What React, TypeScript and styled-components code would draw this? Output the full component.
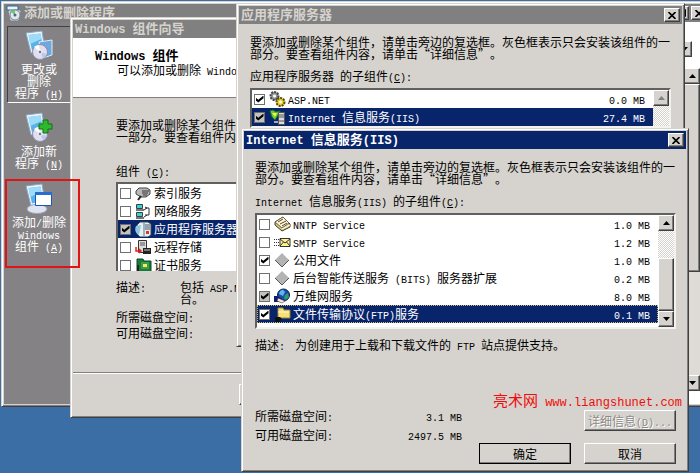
import React from "react";
import styled, { createGlobalStyle, css } from "styled-components";

const face = "#d6d3ce";
const shade = "#808080";
const dark = "#404040";
const navy = "#08246b";

const GlobalStyle = createGlobalStyle`
  * { box-sizing: border-box; }
  html, body { margin: 0; height: 100%; }
  body {
    font: 12px/12px "Noto Sans CJK SC", sans-serif;
    color: #000;
    text-spacing-trim: space-all;
    overflow: hidden;
  }
  p, h1, h2, dl, dd, dt, ul { margin: 0; padding: 0; }
`;

/* ---------- text ---------- */

const Latin = styled.span<{ $size: number }>`
  font-family: "Liberation Mono", monospace;
  font-size: ${(p) => p.$size}px;
  line-height: 0;
  white-space: pre-wrap;
`;

/* Latin runs are set in a half-width face; "&" marks an accelerator key. */
function Mixed({ text, size = 10 }: { text: string; size?: number }) {
  return (
    <>
      {text.split(/([\x20-\x7e]+)/).map((run, i) => {
        if (i % 2 === 0) return run;
        const at = run.indexOf("&");
        return (
          <Latin key={i} $size={size}>
            {at < 0 ? run : (
              <>
                {run.slice(0, at)}
                <u>{run[at + 1]}</u>
                {run.slice(at + 2)}
              </>
            )}
          </Latin>
        );
      })}
    </>
  );
}

/* ---------- window chrome ---------- */

const raised = css`
  border: 1px solid;
  border-color: #fff ${dark} ${dark} #fff;
  box-shadow: inset -1px -1px 0 ${shade};
  background: ${face};
`;

const Desktop = styled.main`
  position: relative;
  min-height: 100vh;
  overflow: hidden;
  background: #3a6ea5;
`;

const Window = styled.section<{ $top: number; $left: number; $right: number }>`
  position: absolute;
  top: ${(p) => p.$top}px;
  left: ${(p) => p.$left}px;
  right: ${(p) => p.$right}px;
  padding: 2px;
  background: ${face};
  border: 1px solid;
  border-color: ${face} ${dark} ${dark} ${face};
  box-shadow: inset 1px 1px 0 #fff, inset -1px -1px 0 ${shade};
`;

const TitleBar = styled.header<{ $active?: boolean }>`
  display: flex;
  align-items: center;
  gap: 2px;
  height: 18px;
  padding: 0 2px;
  background: ${(p) => (p.$active ? navy : shade)};
  color: ${(p) => (p.$active ? "#fff" : face)};
`;

const Title = styled.h1`
  flex: 1;
  padding-bottom: 2px;
  font-size: 13px;
  line-height: 16px;
  font-weight: 700;
  white-space: nowrap;
`;

const CaptionButton = styled.button`
  ${raised}
  display: grid;
  place-items: center;
  width: 16px;
  height: 14px;
  padding: 0;
  color: #000;
`;

const CloseGlyph = () => (
  <svg width="8" height="7" viewBox="0 0 8 7" stroke="currentColor" strokeWidth="1.6">
    <path d="M0.5 0L7.5 7M7.5 0L0.5 7" />
  </svg>
);

const Close = () => (
  <CaptionButton aria-label="关闭"><CloseGlyph /></CaptionButton>
);

/* ---------- scroll bar ---------- */

const Track = styled.div`
  display: flex;
  flex-direction: column;
  width: 16px;
  background: repeating-conic-gradient(#fff 0 25%, ${face} 0 50%) 0 0 / 2px 2px;
`;

const ArrowButton = styled.button`
  ${raised}
  display: grid;
  place-items: center;
  flex: none;
  width: 16px;
  height: 16px;
  padding: 0;
  color: #000;
  &:disabled { color: ${shade}; }
`;

const Thumb = styled.div<{ $before: number; $length: number }>`
  ${raised}
  margin-top: ${(p) => p.$before}px;
  height: ${(p) => p.$length}px;
`;

const Gap = styled.div`
  flex: 1;
`;

const Arrow = ({ down }: { down?: boolean }) => (
  <svg width="7" height="4" viewBox="0 0 7 4" fill="currentColor">
    <path d={down ? "M0 0H7L3.5 4Z" : "M0 4H7L3.5 0Z"} />
  </svg>
);

/* ---------- component list ---------- */

const ListBox = styled.div`
  display: flex;
  border: 2px solid;
  border-color: #606060 #f4f2ee #f4f2ee #606060;
  background: #fff;
`;

const Rows = styled.ul<{ $end: number }>`
  flex: 1;
  min-width: 0;
  list-style: none;
  padding-bottom: ${(p) => p.$end}px;
`;

const Row = styled.li<{ $selected?: boolean; $focused?: boolean }>`
  background: ${(p) => (p.$selected ? navy : "#fff")};
  color: ${(p) => (p.$selected ? "#fff" : "#000")};
  outline: ${(p) => (p.$focused ? "1px dotted #c8b878" : "none")};
  outline-offset: -1px;
`;

const RowLabel = styled.label`
  display: flex;
  align-items: center;
  height: 18px;
  padding: 0 8px 0 2px;
  gap: 4px;
  white-space: nowrap;
  svg { flex: none; }
`;

const RowName = styled.span`
  flex: 1;
  margin-left: -2px;
`;

const Check = styled.input<{ $grey?: boolean }>`
  appearance: none;
  flex: none;
  display: grid;
  place-items: center;
  width: 11px;
  height: 11px;
  margin: 0;
  border: 1px solid #707070;
  background: ${(p) => (p.$grey ? "#c4c2be" : "#fff")};
  &:checked::after {
    content: "";
    width: 8px;
    height: 7px;
    background: #000;
    clip-path: polygon(0 30%, 35% 60%, 100% 0, 100% 38%, 35% 100%, 0 68%);
  }
`;

interface Item {
  name: string;
  icon: React.ReactNode;
  size?: string;
  checked?: boolean;
  grey?: boolean;
  selected?: boolean;
  focused?: boolean;
}

function ComponentRows({ items, end = 0 }: { items: Item[]; end?: number }) {
  return (
    <Rows $end={end}>
      {items.map((it) => (
        <Row key={it.name} $selected={it.selected} $focused={it.focused}>
          <RowLabel>
            <Check type="checkbox" defaultChecked={it.checked} $grey={it.grey} />
            {it.icon}
            <RowName><Mixed text={it.name} /></RowName>
            {it.size && <span><Mixed text={it.size} /></span>}
          </RowLabel>
        </Row>
      ))}
    </Rows>
  );
}

/* ---------- small icons ---------- */

const Icon = ({ children }: { children: React.ReactNode }) => (
  <svg width="17" height="16" viewBox="0 0 17 16">{children}</svg>
);

const IndexIcon = (
  <Icon>
    <path d="M1 6L4 3H12L15 5V9L11 12H6L1 9Z" fill="#b8b8b8" stroke="#444" />
    <path d="M7 6H14M7 8H13M8 10H12" stroke="#333" />
    <path d="M6 11L3 15" stroke="#222" strokeWidth="2" />
  </Icon>
);
const NetworkIcon = (
  <Icon>
    <path d="M1.500 1.500H7.500V5.500H1.500ZM1.500 9.500H7.500V13.500H1.500Z" fill="#4cc" stroke="#344" />
    <path d="M1 7H9M1 15H9" stroke="#777" strokeWidth="2" />
    <path d="M10 5H14V12H10" fill="none" stroke="#333" />
    <path d="M9 7L12 5L10 4M12 12L9 14" stroke="#333" fill="none" />
  </Icon>
);
const ServerIcon = (
  <Icon>
    <path d="M5 1H13L16 3V14L13 16H5L2 13V4Z" fill="#e8eef0" stroke="#345" />
    <path d="M9 2V15" stroke="#578" />
    <path d="M10 4H15M10 6H15M10 8H15" stroke="#456" />
    <path d="M1 5C-0.500 8 0 12 4 14L6 4Z" fill="#8cc8e0" />
    <path d="M11 10H14V13H11Z" fill="#d33" />
  </Icon>
);
const StorageIcon = (
  <Icon>
    <path d="M3.500 1.500H11.500V13.500H3.500Z" fill="#ddd" stroke="#333" />
    <path d="M5 4H10M5 6H10" stroke="#555" />
    <path d="M8 9H16V15H8Z" fill="#222" />
    <path d="M9 11H15" stroke="#ccc" />
    <path d="M1 8V12H6M4 10L6 12L4 14" fill="none" stroke="#d22" strokeWidth="1.500" />
  </Icon>
);
const CertIcon = (
  <Icon>
    <path d="M2 2H8L9 4H16V15H2Z" fill="#1c7a38" stroke="#143" />
    <path d="M6 5H14V12H6Z" fill="#36a04c" />
    <path d="M8 7H12V10H8Z" fill="#ffe94a" />
    <path d="M3 8V15" stroke="#222" strokeWidth="2" />
  </Icon>
);
const GearsIcon = (
  <Icon>
    <circle cx="5.500" cy="5" r="4" fill="#8c9498" stroke="#444" strokeDasharray="2 1" strokeWidth="2" />
    <circle cx="5.500" cy="5" r="1.500" fill="#fff" />
    <circle cx="11.500" cy="11" r="4" fill="#e8cc28" stroke="#5a4a00" strokeDasharray="2 1" strokeWidth="2" />
    <circle cx="11.500" cy="11" r="1.500" fill="#fff" />
  </Icon>
);
const IisIcon = (
  <Icon>
    <path d="M1 2L4 1L7 3L11 2L9 6L6 11L3 8Z" fill="#6bc82c" stroke="#174" />
    <path d="M3 4L6 8L8 4Z" fill="#f4f44c" />
    <path d="M9.500 3.500H15.500V15.500H9.500Z" fill="#d8dcd8" stroke="#555" />
    <path d="M10 6H15M10 8H15M10 12H15" stroke="#555" />
    <path d="M5 13H9" stroke="#aaa" strokeWidth="2" />
  </Icon>
);
const NewsIcon = (
  <Icon>
    <path d="M1 6L9 1L16 8V11L8 15L1 9Z" fill="#d8c888" stroke="#443a18" />
    <path d="M1 6L9 1L15 7L8 12Z" fill="#fff6cc" stroke="#665" />
    <path d="M4 6L9 3M6 8L12 5M8 10L13 7" stroke="#544" />
    <path d="M8 13L16 9" stroke="#fff" />
  </Icon>
);
const MailIcon = (
  <Icon>
    <path d="M0 5.500H5M0 8.500H5M0 11.500H5" stroke="#333" strokeDasharray="1 1" />
    <path d="M6 4.500H16V12.500H6Z" fill="#fff48c" stroke="#333" />
    <path d="M6 5L11 9L16 5M6 12L9.500 8M16 12L12.500 8" fill="none" stroke="#333" />
  </Icon>
);
const DiamondIcon = (
  <Icon>
    <path d="M8 1L15 8L8 15L1 8Z" fill="#b4b4b4" />
    <path d="M8 1L1 8" stroke="#ddd" />
    <path d="M15 8L8 15L1 8" fill="none" stroke="#555" />
  </Icon>
);
const GlobeIcon = (
  <Icon>
    <circle cx="9.500" cy="7" r="6" fill="#1c48b0" stroke="#0c1c44" />
    <path d="M6 3L9 1.500L11 4L9 8L5 6Z" fill="#58b8e8" />
    <path d="M11 7L14 5L15 9L12 12L10 10Z" fill="#2c9c68" />
    <path d="M0 8H3L7 10L9 12L6 14H0Z" fill="#101c6c" />
    <path d="M4 10L11 13L8 15L3 13Z" fill="#f4e8d8" stroke="#222" strokeWidth="0.500" />
  </Icon>
);
const FolderIcon = (
  <Icon>
    <path d="M4 2H9L10 4H16V12H4Z" fill="#f4e07c" stroke="#9c8430" />
    <path d="M4 6H15" stroke="#fff8c8" />
    <path d="M1 11H6L8 13L5 16H1Z" fill="#111" />
  </Icon>
);

/* ---------- add/remove programs ---------- */

const Panes = styled.div`
  display: flex;
  height: 382px;
`;

const Sidebar = styled.nav`
  flex: none;
  width: 67px;
  background: #848284;
  padding: 4px 0 0 3px;
`;

const Place = styled.button<{ $pressed?: boolean }>`
  display: flex;
  flex-direction: column;
  align-items: center;
  gap: 1px;
  width: 100%;
  height: ${(p) => (p.$pressed ? 77 : 66)}px;
  padding: 3px 0 0;
  background: none;
  border: 1px solid;
  border-color: ${(p) => (p.$pressed ? `${dark} #fff #fff ${dark}` : "transparent")};
  color: #fff;
  font: inherit;
  white-space: pre-line;
  & + & { margin-top: 5px; }
  svg { flex: none; }
`;

const PlaceIcon = ({ kind }: { kind: "change" | "add" | "windows" }) => (
  <svg width="32" height="32" viewBox="0 0 32 32">
    <path d="M3 3L19 1L22 20L8 23Z" fill="#f0f6fc" stroke="#8aa8c8" />
    <path d="M5.500 5L17.500 3.500L20 18L9 20.500Z" fill="#58b4e8" />
    <path d="M5.500 5L17.500 3.500L18.500 9L7 14Z" fill="#9cdcf8" />
    {kind === "windows" ? (
      <>
        <ellipse cx="14" cy="26" rx="10" ry="4.500" fill="#dfe4f0" stroke="#9aa4bc" />
        <path d="M12.500 9.500H28.500V22.500H12.500Z" fill="#fff" stroke="#1c58b8" />
        <path d="M12 9H29V12H12Z" fill="#2a6cd0" />
      </>
    ) : (
      <>
        {kind === "change" && <path d="M16 12L29 10V25L20 28Z" fill="#6ea8dc" stroke="#dcecf8" />}
        <circle cx="17" cy="22" r="7.500" fill="#e0def0" stroke="#8c90a8" />
        <path d="M17 22L11 17A7 7 0 0 1 16 15Z" fill="#fff" />
        <path d="M17 22L24 24A7 7 0 0 1 20 28Z" fill="#b8c8f0" />
        <circle cx="17" cy="22" r="2" fill="#777e90" stroke="#fff" />
        {kind === "add" && <path d="M20 8H25V12H29V17H25V21H20V17H16V12H20Z" fill="#2eb82e" stroke="#127012" />}
      </>
    )}
  </svg>
);

const Programs = styled.div`
  flex: 1;
  display: flex;
  flex-direction: column;
  align-items: flex-end;
  background: #fff;
  padding: 19px 9px 13px;
`;

const Combo = styled.div`
  display: flex;
  justify-content: flex-end;
  height: 18px;
  margin: 0 8px 9px 0;
`;

const TallTrack = styled(Track)`
  flex: 1;
  background: #dedbd6;
`;

/* ---------- dialogs ---------- */

const Body = styled.div`
  padding: 12px 10px 5px 11px;
`;

const ServerBody = styled(Body)`
  padding: 12px 11px 216px;
`;

const Caption = styled.h2`
  margin: 10px 0 6px;
  font-size: 12px;
  font-weight: 400;
  line-height: 12px;
  white-space: nowrap;
`;

const Note = styled.dl`
  display: flex;
  gap: 10px;
  margin-top: 10px;
`;

const Summary = styled.div`
  display: flex;
  justify-content: space-between;
  align-items: flex-start;
  margin-top: 59px;
`;

const Space = styled.dl`
  display: grid;
  grid-template-columns: 97px 110px;
  row-gap: 7px;
  dd { text-align: right; }
`;

const Actions = styled.div`
  display: flex;
  justify-content: flex-end;
  gap: 13px;
  margin-top: 2px;
`;

const PushButton = styled.button<{ $primary?: boolean }>`
  ${raised}
  min-width: 92px;
  height: 21px;
  padding: 0 2px;
  color: #000;
  font: inherit;
  outline: ${(p) => (p.$primary ? "1px solid #000" : "none")};
  outline-offset: -1px;
  &:disabled { color: #8c8a86; text-shadow: 1px 1px 0 #fff; }
`;

const WizardHead = styled.div`
  height: 60px;
  padding: 10px 22px;
  background: #fff;
  border-bottom: 1px solid ${shade};
  p { margin: 2px 0 0 22px; white-space: nowrap; }
`;

const WizardTitle = styled.h2`
  font-size: 13px;
  line-height: 14px;
`;

const WizardBody = styled.div`
  width: 461px;
  padding: 21px 0 33px 43px;
`;

const WizardCaption = styled(Caption)`
  margin: 22px 0 5px;
`;

const Clip = styled.div`
  height: 89px;
  overflow: hidden;
`;

const WizardFacts = styled.dl`
  display: grid;
  grid-template-columns: 64px 1fr;
  margin: 10px 0 6px;
  white-space: nowrap;
`;

const WizardSpace = styled.p`
  margin-bottom: 4px;
`;

const WizardFoot = styled.footer`
  display: flex;
  height: 43px;
  padding: 11px 0 0 166px;
  border-top: 1px solid ${shade};
  box-shadow: inset 0 1px 0 #fff;
`;

const Marker = styled.div`
  position: absolute;
  top: 179px;
  left: 5px;
  width: 75px;
  height: 89px;
  border: 2px solid #e01414;
  pointer-events: none;
`;

const Watermark = styled.div`
  position: absolute;
  top: 392px;
  right: 18px;
  color: #f00c0c;
  font-size: 15px;
  line-height: 16px;
  white-space: nowrap;
`;

const intro = "要添加或删除某个组件，请单击旁边的复选框。灰色框表示只会安装该组件的一部分。要查看组件内容，请单击“详细信息”。";

const wizardItems: Item[] = [
  { name: "索引服务", icon: IndexIcon },
  { name: "网络服务", icon: NetworkIcon },
  { name: "应用程序服务器", icon: ServerIcon, checked: true, grey: true, selected: true },
  { name: "远程存储", icon: StorageIcon },
  { name: "证书服务", icon: CertIcon },
];

const serverItems: Item[] = [
  { name: "ASP.NET", icon: GearsIcon, size: "0.0 MB", checked: true },
  { name: "Internet 信息服务(IIS)", icon: IisIcon, size: "27.4 MB", checked: true, grey: true, selected: true },
];

const iisItems: Item[] = [
  { name: "NNTP Service", icon: NewsIcon, size: "1.0 MB" },
  { name: "SMTP Service", icon: MailIcon, size: "1.2 MB" },
  { name: "公用文件", icon: DiamondIcon, size: "1.0 MB", checked: true },
  { name: "后台智能传送服务 (BITS) 服务器扩展", icon: DiamondIcon, size: "0.2 MB" },
  { name: "万维网服务", icon: GlobeIcon, size: "8.0 MB", checked: true, grey: true },
  { name: "文件传输协议(FTP)服务", icon: FolderIcon, size: "0.1 MB", checked: true, selected: true, focused: true },
];

const places = [
  { kind: "change" as const, text: "更改或\n删除\n程序 (&H)", pressed: true },
  { kind: "add" as const, text: "添加新\n程序 (&N)" },
  { kind: "windows" as const, text: "添加/删除\nWindows\n组件 (&A)" },
];

export default function App() {
  return (
    <Desktop>
      <GlobalStyle />

      <Window $top={1} $left={1} $right={-12}>
        <TitleBar>
          <svg width="16" height="16" viewBox="0 0 16 16">
            <path d="M1 1H12V5H1Z" fill="#e8f4fc" stroke="#369" />
            <path d="M3 6H14L12 15H5Z" fill="#58a8d8" stroke="#dde" />
            <circle cx="9" cy="10" r="5" fill="#e4e8ec" stroke="#789" />
            <path d="M9 10L5 7A5 5 0 0 1 9 5Z" fill="#6c6" />
            <circle cx="9" cy="10" r="1.5" fill="#567" />
          </svg>
          <Title>添加或删除程序</Title>
          <CaptionButton aria-label="最大化">
            <svg width="9" height="8" viewBox="0 0 9 8" fill="none" stroke="#000">
              <path d="M0.500 0.500H8.500V7.500H0.500ZM0 1.500H9" />
            </svg>
          </CaptionButton>
          <Close />
        </TitleBar>
        <Panes>
          <Sidebar>
            {places.map((p) => (
              <Place key={p.kind} $pressed={p.pressed}>
                <PlaceIcon kind={p.kind} />
                <span><Mixed text={p.text} /></span>
              </Place>
            ))}
          </Sidebar>
          <Programs>
            <Combo><ArrowButton aria-label="排序方式"><Arrow down /></ArrowButton></Combo>
            <TallTrack>
              <ArrowButton aria-label="向上"><Arrow /></ArrowButton>
              <Thumb $before={0} $length={188} />
              <Gap />
              <ArrowButton aria-label="向下"><Arrow down /></ArrowButton>
            </TallTrack>
          </Programs>
        </Panes>
      </Window>

      <Window $top={17} $left={70} $right={130}>
        <TitleBar><Title><Mixed text="Windows 组件向导" size={12} /></Title></TitleBar>
        <WizardHead>
          <WizardTitle><Mixed text="Windows 组件" size={12} /></WizardTitle>
          <p><Mixed text="可以添加或删除 Windows 的组件。" /></p>
        </WizardHead>
        <WizardBody>
          <p>{intro}</p>
          <WizardCaption><Mixed text="组件 (&C):" /></WizardCaption>
          <Clip>
            <ListBox><ComponentRows items={wizardItems} /></ListBox>
          </Clip>
          <WizardFacts>
            <dt><Mixed text="描述:" /></dt>
            <dd><Mixed text="包括 ASP.NET" /><br />台。</dd>
          </WizardFacts>
          <WizardSpace><Mixed text="所需磁盘空间:" /></WizardSpace>
          <p><Mixed text="可用磁盘空间:" /></p>
        </WizardBody>
        <WizardFoot><PushButton aria-label="上一步" /></WizardFoot>
      </Window>

      <Window $top={3} $left={236} $right={15}>
        <TitleBar><Title>应用程序服务器</Title><Close /></TitleBar>
        <ServerBody>
          <p>{intro}</p>
          <Caption><Mixed text="应用程序服务器 的子组件(&C):" /></Caption>
          <ListBox>
            <ComponentRows items={serverItems} />
            <Track><ArrowButton aria-label="向上" disabled><Arrow /></ArrowButton></Track>
          </ListBox>
        </ServerBody>
      </Window>

      <Window $top={128} $left={241} $right={11}>
        <TitleBar $active><Title><Mixed text="Internet 信息服务(IIS)" size={12} /></Title><Close /></TitleBar>
        <Body>
          <p>{intro}</p>
          <Caption><Mixed text="Internet 信息服务(IIS) 的子组件(&C):" /></Caption>
          <ListBox>
            <ComponentRows items={iisItems} end={4} />
            <Track>
              <ArrowButton aria-label="向上"><Arrow /></ArrowButton>
              <Thumb $before={27} $length={53} />
              <ArrowButton aria-label="向下"><Arrow down /></ArrowButton>
            </Track>
          </ListBox>
          <Note>
            <dt><Mixed text="描述:" /></dt>
            <dd><Mixed text="为创建用于上载和下载文件的 FTP 站点提供支持。" /></dd>
          </Note>
          <Summary>
            <Space>
              <dt><Mixed text="所需磁盘空间:" /></dt>
              <dd><Mixed text="3.1 MB" /></dd>
              <dt><Mixed text="可用磁盘空间:" /></dt>
              <dd><Mixed text="2497.5 MB" /></dd>
            </Space>
            <PushButton disabled><Mixed text="详细信息(&D)..." /></PushButton>
          </Summary>
          <Actions>
            <PushButton $primary>确定</PushButton>
            <PushButton>取消</PushButton>
          </Actions>
        </Body>
      </Window>

      <Marker />
      <Watermark><Mixed text="亮术网 www.liangshunet.com" size={12} /></Watermark>
    </Desktop>
  );
}
